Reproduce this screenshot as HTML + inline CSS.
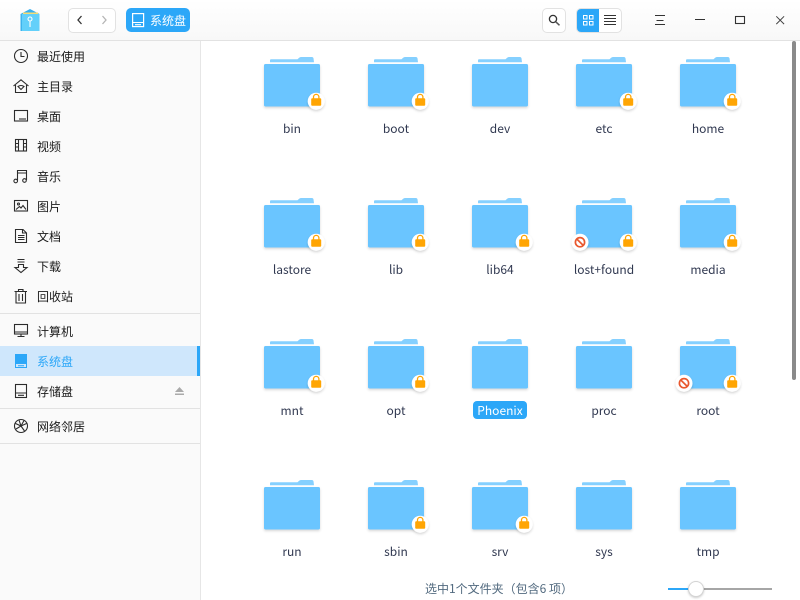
<!DOCTYPE html>
<html lang="zh"><head><meta charset="utf-8"><title>系统盘</title>
<style>
html,body{margin:0;padding:0;background:#fff}
#w{position:relative;width:800px;height:600px;overflow:hidden;background:#fff;font-family:"Liberation Sans","Noto Sans CJK SC",sans-serif}
#top{position:absolute;left:0;top:0;width:800px;height:40px;background:linear-gradient(#fff,#f8f8f8);border-bottom:1px solid #e2e2e2}
#side{position:absolute;left:0;top:41px;width:200px;height:559px;background:#fafafa;border-right:1px solid #e6e6e6}
.i{position:absolute;left:37px;font-size:12px;line-height:18px;color:#1a1a1a;font-family:"Noto Sans CJK SC",sans-serif;white-space:nowrap}
.hr{position:absolute;left:0;width:200px;height:1px;background:#e2e2e2}
.l{position:absolute;width:104px;text-align:center;font-size:12px;line-height:18px;color:#303850;font-family:"Noto Sans CJK SC",sans-serif;white-space:nowrap}
svg{position:absolute;overflow:visible}
.f{width:70px;height:60px}
.ic{fill:none;stroke:#2c2c2c;stroke-width:1.1}
</style></head><body><div id="w">
<svg width="0" height="0" style="left:0;top:0"><defs>
<filter id="sh" x="-10%" y="-10%" width="120%" height="130%"><feDropShadow dx="0" dy="1.500" stdDeviation="1.200" flood-color="#000" flood-opacity=".16"/></filter>
<symbol id="fo" viewBox="0 0 70 60" overflow="visible"><path d="M6 2.300q0-1 1-1h26.500l1.500-1.400q.8-.9 2-.9h11q1.300 0 1.500 1.300l.5 3.900H6z" fill="#85d0ff"/><rect x="0" y="6" width="56" height="42.500" rx="1.500" fill="#6bc5ff" filter="url(#sh)"/></symbol>
<symbol id="lk" viewBox="0 0 70 60" overflow="visible"><circle cx="52.200" cy="43.200" r="8.500" fill="#fff" filter="url(#sh)"/><rect x="47.200" y="40.300" width="10" height="7.500" rx="1" fill="#ffa503"/><path d="M49.500 40.500v-1.400a2.700 2.700 0 0 1 5.400 0v1.400" fill="none" stroke="#ffa503" stroke-width="1.300"/></symbol>
<symbol id="no" viewBox="0 0 70 60" overflow="visible"><circle cx="4" cy="43.200" r="8.500" fill="#fff" filter="url(#sh)"/><circle cx="4" cy="43.200" r="4.600" fill="none" stroke="#e9582f" stroke-width="1.700"/><path d="M0.800 40l6.400 6.400" stroke="#e9582f" stroke-width="1.700"/></symbol>
</defs></svg>

<div id="top"></div>
<svg style="left:20px;top:9px" width="20" height="22" viewBox="0 0 20 22"><path d="M0.500 5 10 0l9.500 5z" fill="#37b0f0"/><path d="M3 3.500h15v1.800H3z" fill="#f7dc75"/><rect x="0.500" y="5" width="19" height="17" fill="#63d0fa"/><rect x="0.500" y="5" width="1.500" height="17" fill="#3db4ee"/><circle cx="10" cy="10" r="2" fill="none" stroke="#fff" stroke-width="1.100"/><path d="M10 12v6" stroke="#fff" stroke-width="1.100"/></svg>
<div style="position:absolute;left:68px;top:8px;width:46px;height:23px;background:#fff;border:1px solid #e2e2e2;border-radius:5px"></div>
<svg style="left:76px;top:15px" width="8" height="10"><path d="M5.500 1 2 5l3.500 4" fill="none" stroke="#333" stroke-width="1.300"/></svg>
<svg style="left:100px;top:15px" width="8" height="10"><path d="M2.500 1 6 5 2.500 9" fill="none" stroke="#b5b5b5" stroke-width="1.300"/></svg>
<div style="position:absolute;left:126px;top:8px;width:64px;height:24px;background:#2ca7f8;border-radius:5px"></div>
<svg style="left:132px;top:13px" width="13" height="15"><rect x=".6" y=".6" width="11" height="13" fill="none" stroke="#fff" stroke-width="1.200"/><path d="M.6 9.500h11M3 11.700h6" stroke="#fff" stroke-width="1.100"/></svg>
<div style="position:absolute;left:150px;top:12px;font-size:12px;line-height:18px;color:#fff;font-family:'Noto Sans CJK SC',sans-serif">系统盘</div>

<div style="position:absolute;left:542px;top:8px;width:22px;height:23px;background:#fff;border:1px solid #e2e2e2;border-radius:5px"></div>
<svg style="left:548px;top:14px" width="13" height="13"><circle cx="5" cy="5" r="3.600" fill="none" stroke="#333" stroke-width="1.300"/><path d="M7.800 7.800 11.500 11.300" stroke="#555" stroke-width="1.500"/></svg>
<div style="position:absolute;left:576px;top:8px;width:44px;height:23px;background:#fff;border:1px solid #e2e2e2;border-radius:5px;overflow:hidden"><div style="width:22px;height:23px;background:#2ca7f8"></div></div>
<svg style="left:583px;top:15px" width="11" height="11"><g fill="none" stroke="#fff"><rect x=".5" y=".5" width="3.500" height="3.500"/><rect x="6.500" y=".5" width="3.500" height="3.500"/><rect x=".5" y="6.500" width="3.500" height="3.500"/><rect x="6.500" y="6.500" width="3.500" height="3.500"/></g></svg>
<svg style="left:604px;top:15px" width="13" height="11"><path d="M0 .5h12M0 3.500h12M0 6.500h12M0 9.500h12" stroke="#333"/></svg>
<svg style="left:655px;top:15px" width="11" height="11"><path d="M0 .5h10M1.500 5.500h7M0 9.500h10" stroke="#333"/></svg>
<svg style="left:695px;top:19px" width="11" height="2"><path d="M0 .5h10" stroke="#333" stroke-width="1"/></svg>
<svg style="left:735px;top:16px" width="11" height="9"><rect x=".5" y=".5" width="9" height="7" fill="none" stroke="#333" stroke-width="1.100"/></svg>
<svg style="left:776px;top:16px" width="9" height="9"><path d="M.3.300l7.800 7.800M8.100 .3.300 8.100" stroke="#444" stroke-width="1"/></svg>

<div id="side"></div>
<div style="position:absolute;left:0;top:346px;width:200px;height:30px;background:#cfe7fc"></div>
<div style="position:absolute;left:197px;top:346px;width:3px;height:30px;background:#2ca7f8"></div>
<div class="hr" style="top:313px"></div><div class="hr" style="top:408px"></div><div class="hr" style="top:443px"></div>

<svg class="ic" style="left:14px;top:49px" width="15" height="15"><circle cx="7" cy="7" r="6.500"/><path d="M7 3v4.500h3.500"/></svg>
<svg class="ic" style="left:13px;top:79px" width="17" height="15"><path d="M.5 7 8 .8 15.500 7M2.500 6v7.500h11V6"/><path d="M5 7.500q3-2 6 0L8 10.500z"/></svg>
<svg class="ic" style="left:14px;top:110px" width="15" height="13"><rect x=".5" y=".5" width="13" height="10.500"/><path d="M5 9h7"/></svg>
<svg class="ic" style="left:15px;top:139px" width="13" height="14"><rect x=".5" y=".5" width="11" height="11.500"/><path d="M3.500.5v11.500M8.500.5v11.500M.5 4.500h3M8.500 4.500h3M.5 8h3M8.500 8h3"/></svg>
<svg class="ic" style="left:13px;top:169px" width="15" height="15"><path d="M4.500 11.500V1.500h9V11M4.500 4h9"/><circle cx="2.700" cy="12" r="1.800"/><circle cx="11.500" cy="11.500" r="1.800"/></svg>
<svg class="ic" style="left:14px;top:200px" width="15" height="13"><rect x=".5" y=".5" width="13" height="10.500"/><circle cx="4.500" cy="4" r="1"/><path d="M2 9.500 5.500 6.500 7 8 9 5.500 12 9.500"/></svg>
<svg class="ic" style="left:15px;top:229px" width="13" height="15"><path d="M.5.500h7.500l3.500 3.500V13.500H.5z"/><path d="M3 6.500h6.500M3 8.500h6.500M3 10.500h6.500M7.500.5V4h4"/></svg>
<svg class="ic" style="left:14px;top:259px" width="15" height="15"><path d="M3.500.5h7M3.500 3h7M4.500 5.500h5v3h3.500L7 13.500 1 8.500h3.500z"/></svg>
<svg class="ic" style="left:14px;top:289px" width="14" height="15"><path d="M.5 2.500h12.500M4.500 2.500V.5h4.500v2M2 2.500v11.500h9.500V2.500M5 5v7M8.500 5v7"/></svg>
<svg class="ic" style="left:14px;top:324px" width="15" height="14"><rect x=".5" y=".5" width="13" height="9.500"/><path d="M.5 8h13M7 10v2.500M3.500 12.500h7"/></svg>
<svg style="left:15px;top:354px" width="13" height="15"><rect x="0" y="0" width="12" height="10" fill="#2ca7f8"/><path d="M.5 10v3.500h11V10M3 11.800h6" fill="none" stroke="#2ca7f8"/></svg>
<svg class="ic" style="left:15px;top:384px" width="13" height="15"><rect x=".5" y=".5" width="11" height="13"/><path d="M.5 9h11M3 11.300h6"/></svg>
<svg class="ic" style="left:14px;top:419px" width="15" height="15"><circle cx="7" cy="7" r="6.500"/><path d="M1.500 4.500 7 7l3.500 5M5 1 7 7l-5 3M7 7l5.500-2.500M10 1.500 7 7"/></svg>

<div class="i" style="top:48px">最近使用</div>
<div class="i" style="top:78px">主目录</div>
<div class="i" style="top:108px">桌面</div>
<div class="i" style="top:138px">视频</div>
<div class="i" style="top:168px">音乐</div>
<div class="i" style="top:198px">图片</div>
<div class="i" style="top:228px">文档</div>
<div class="i" style="top:258px">下载</div>
<div class="i" style="top:288px">回收站</div>
<div class="i" style="top:323px">计算机</div>
<div class="i" style="top:353px;color:#2ca7f8">系统盘</div>
<div class="i" style="top:383px">存储盘</div>
<div class="i" style="top:418px">网络邻居</div>
<svg style="left:175px;top:387px" width="9" height="8"><path d="M4.500 0 9 5H0z" fill="#aaa"/><path d="M0 6.500h9v1.500H0z" fill="#aaa"/></svg>

<svg class="f" style="left:264px;top:58px"><use href="#fo"/><use href="#lk"/></svg>
<svg class="f" style="left:368px;top:58px"><use href="#fo"/><use href="#lk"/></svg>
<svg class="f" style="left:472px;top:58px"><use href="#fo"/></svg>
<svg class="f" style="left:576px;top:58px"><use href="#fo"/><use href="#lk"/></svg>
<svg class="f" style="left:680px;top:58px"><use href="#fo"/><use href="#lk"/></svg>
<svg class="f" style="left:264px;top:199px"><use href="#fo"/><use href="#lk"/></svg>
<svg class="f" style="left:368px;top:199px"><use href="#fo"/><use href="#lk"/></svg>
<svg class="f" style="left:472px;top:199px"><use href="#fo"/><use href="#lk"/></svg>
<svg class="f" style="left:576px;top:199px"><use href="#fo"/><use href="#lk"/><use href="#no"/></svg>
<svg class="f" style="left:680px;top:199px"><use href="#fo"/><use href="#lk"/></svg>
<svg class="f" style="left:264px;top:340px"><use href="#fo"/><use href="#lk"/></svg>
<svg class="f" style="left:368px;top:340px"><use href="#fo"/><use href="#lk"/></svg>
<svg class="f" style="left:472px;top:340px"><use href="#fo"/></svg>
<svg class="f" style="left:576px;top:340px"><use href="#fo"/></svg>
<svg class="f" style="left:680px;top:340px"><use href="#fo"/><use href="#lk"/><use href="#no"/></svg>
<svg class="f" style="left:264px;top:481px"><use href="#fo"/></svg>
<svg class="f" style="left:368px;top:481px"><use href="#fo"/><use href="#lk"/></svg>
<svg class="f" style="left:472px;top:481px"><use href="#fo"/><use href="#lk"/></svg>
<svg class="f" style="left:576px;top:481px"><use href="#fo"/></svg>
<svg class="f" style="left:680px;top:481px"><use href="#fo"/></svg>

<div class="l" style="left:240px;top:120px">bin</div>
<div class="l" style="left:344px;top:120px">boot</div>
<div class="l" style="left:448px;top:120px">dev</div>
<div class="l" style="left:552px;top:120px">etc</div>
<div class="l" style="left:656px;top:120px">home</div>
<div class="l" style="left:240px;top:261px">lastore</div>
<div class="l" style="left:344px;top:261px">lib</div>
<div class="l" style="left:448px;top:261px">lib64</div>
<div class="l" style="left:552px;top:261px">lost+found</div>
<div class="l" style="left:656px;top:261px">media</div>
<div class="l" style="left:240px;top:402px">mnt</div>
<div class="l" style="left:344px;top:402px">opt</div>
<div style="position:absolute;left:473px;top:401px;width:54px;height:18px;background:#2ca7f8;border-radius:4px"></div>
<div class="l" style="left:448px;top:402px;color:#fff">Phoenix</div>
<div class="l" style="left:552px;top:402px">proc</div>
<div class="l" style="left:656px;top:402px">root</div>
<div class="l" style="left:240px;top:543px">run</div>
<div class="l" style="left:344px;top:543px">sbin</div>
<div class="l" style="left:448px;top:543px">srv</div>
<div class="l" style="left:552px;top:543px">sys</div>
<div class="l" style="left:656px;top:543px">tmp</div>

<div style="position:absolute;left:792px;top:41px;width:4px;height:339px;background:#8a8a8a;border-radius:2px"></div>

<div style="position:absolute;left:425px;top:580px;font-size:12px;line-height:18px;color:#526a7f;font-family:'Noto Sans CJK SC',sans-serif;white-space:nowrap">选中1个文件夹（包含6 项）</div>
<div style="position:absolute;left:668px;top:588px;width:104px;height:2px;background:#a6a6a6"></div>
<div style="position:absolute;left:668px;top:588px;width:22px;height:2px;background:#2ca7f8"></div>
<div style="position:absolute;left:688px;top:581px;width:14px;height:14px;background:#fff;border:1px solid #d4d4d4;border-radius:50%;box-shadow:0 1px 2px rgba(0,0,0,.2)"></div>
</div></body></html>
